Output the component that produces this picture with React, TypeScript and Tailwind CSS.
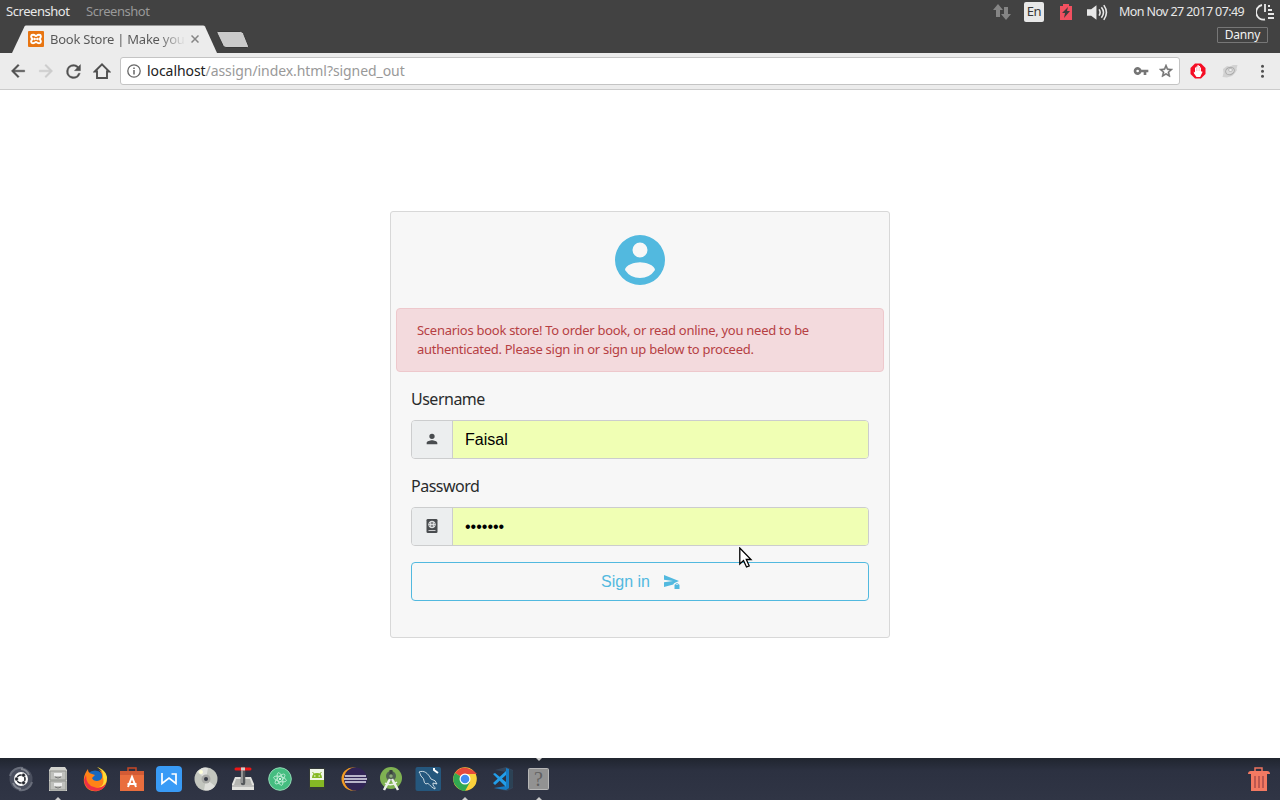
import type { ReactNode } from 'react'

function Svg({ size = 26, box = '0 0 26 26', className = '', children }: { size?: number; box?: string; className?: string; children: ReactNode }) {
  return (
    <svg width={size} height={size} viewBox={box} className={`block shrink-0 ${className}`} fill="none">
      {children}
    </svg>
  )
}

function StatusBar() {
  return (
    <div className="flex h-6 items-center justify-between bg-[#424242] text-[13px] text-[#e8e8e8]">
      <div className="flex pl-[6px]">
        <span className="w-20 tracking-[-0.45px]">Screenshot</span>
        <span className="tracking-[-0.45px] text-[#999]">Screenshot</span>
      </div>
      <div className="flex items-center">
        <Svg size={18} box="0 0 18 18">
          <path d="M5 1 0 7h3v7h4V7h3zM11 4v7H8l5 6 5-6h-3V4z" fill="#858585" />
        </Svg>
        <span className="ml-[13px] flex h-5 w-5 items-center justify-center rounded-[2px] bg-[#e8e8e8] text-[13px] tracking-[-0.3px] text-[#383838]">En</span>
        <Svg size={16} box="0 0 16 16" className="ml-[14px]">
          <path d="M5 0h6v2h3v14H2V2h3z" fill="#f15060" />
          <path d="m10 3-6 6h3l-1 5 6-7H9z" fill="#3d3d3d" />
        </Svg>
        <Svg size={21} box="0 0 20 16" className="ml-[13px]">
          <path d="M0 5h4l5-4v14l-5-4H0z" fill="#e8e8e8" />
          <path d="M11.500 5q2 3 0 6M13.700 3q4 5 0 10M16 1q5 7 0 14" stroke="#e8e8e8" strokeWidth="1.500" />
        </Svg>
        <span className="ml-[11px] w-[137px] whitespace-nowrap text-[12.500px] tracking-[-0.6px]">Mon Nov 27 2017 07:49</span>
        <Svg size={18} box="0 0 18 18" className="mr-[6px]">
          <path d="M6 2a7.200 7.200 0 0 0 3 14.500M9 1v8" stroke="#e8e8e8" strokeWidth="1.800" />
          <path d="M12 3h2M12 7h4M12 11h6M12 15h6" stroke="#e8e8e8" strokeWidth="2" />
        </Svg>
      </div>
    </div>
  )
}

function TabStrip() {
  return (
    <div className="flex h-[29px] items-start justify-between bg-[#424242]">
      <div className="flex">
        <div className="relative h-[29px] w-[217px]">
          <svg width="217" height="29" className="absolute inset-0">
            <path d="M12 29 24.500 2.500Q25 1.500 26 1.500h177q1.500 0 2 1L217 29z" fill="#ececec" />
          </svg>
          <div className="relative flex h-[29px] items-center pl-7">
            <Svg size={16} box="0 0 16 16">
              <rect width="16" height="16" rx="1" fill="#e87511" />
              <path d="M5 3.800C2.600 3.800 2.600 6.200 4.500 8 2.600 9.800 2.600 12.200 5 12.200S7 11 8 11s.6 1.200 3 1.200 2.400-2.400.5-4.200c1.900-1.800 1.900-4.200-.5-4.200S9 5 8 5s-.6-1.200-3-1.200Z" stroke="#fff" strokeWidth="2" />
              <path d="M6.300 6.800v2.400M9.700 6.800v2.400M6 8h4" stroke="#fff" strokeWidth="1.300" />
            </Svg>
            <span className="ml-[6px] w-[134px] whitespace-nowrap bg-gradient-to-r from-[#555] from-80% to-[#e0e0e0] bg-clip-text text-[13px] leading-5 tracking-[-0.25px] text-transparent">Book Store | Make you</span>
            <Svg size={8} box="0 0 8 8" className="ml-[7px]">
              <path d="m.5.500 7 7m0-7-7 7" stroke="#858585" strokeWidth="1.500" />
            </Svg>
          </div>
        </div>
        <svg width="34" height="29" className="-ml-[2px]">
          <path d="M2.500 7.500h23q2 0 3 2l5 12.500q.4 1.500-1 1.500H11q-2 0-3-2L2 9q-.4-1.500.5-1.500" fill="#cacaca" stroke="#383838" />
        </svg>
      </div>
      <div className="mr-3 mt-[3px] flex h-4 w-[51px] items-center justify-center rounded-[1px] border border-[#777] text-[12px] leading-none tracking-[-0.15px] text-[#f2f2f2]">Danny</div>
    </div>
  )
}

function Toolbar() {
  return (
    <div className="flex h-[37px] items-center border-b border-[#cbcbcb] bg-[#ececec] pl-2">
      <Svg size={20} box="0 0 24 24">
        <path d="M20 11H7.830l5.590-5.590L12 4l-8 8 8 8 1.410-1.410L7.830 13H20z" fill="#505050" stroke="#505050" strokeWidth=".5" />
      </Svg>
      <Svg size={20} box="0 0 24 24" className="ml-2">
        <path d="m12 4-1.410 1.410L16.170 11H4v2h12.170l-5.580 5.590L12 20l8-8z" fill="#ccc" stroke="#ccc" strokeWidth=".5" />
      </Svg>
      <Svg size={21} box="0 0 24 24" className="ml-[7px]">
        <path d="M17.650 6.350A7.960 7.960 0 0 0 12 4a8 8 0 1 0 7.730 10h-2.080A6 6 0 1 1 12 6c1.660 0 3.140.69 4.220 1.780L13 11h7V4z" fill="#505050" stroke="#505050" strokeWidth=".4" />
      </Svg>
      <Svg size={18} box="0 0 18 18" className="ml-[9px]">
        <path d="M1.800 9.500 9 2.300l7.200 7.200H14V16H4V9.500z" stroke="#505050" strokeWidth="1.900" />
      </Svg>
      <div className="ml-[9px] flex h-7 w-[1060px] items-center rounded-[3px] border border-[#c4c4c4] bg-white pl-[6px] pr-[5px]">
        <Svg size={14} box="0 0 14 14">
          <circle cx="7" cy="7" r="6.200" stroke="#666" strokeWidth="1.300" />
          <path d="M7 6v4.500M7 3.500v1.500" stroke="#666" strokeWidth="1.500" />
        </Svg>
        <span className="ml-[6px] pb-[2px] text-[14px] tracking-[-0.07px] text-[#999]"><span className="text-[#222]">localhost</span>/assign/index.html?signed_out</span>
        <Svg size={16} box="0 0 24 24" className="ml-auto">
          <path d="M12.650 10A6 6 0 1 0 12.650 14H16v4h4v-4h3v-4zM7 14a2 2 0 1 1 0-4 2 2 0 0 1 0 4" fill="#757575" />
        </Svg>
        <Svg size={16} box="0 0 24 24" className="ml-[9px]">
          <path d="m22 9.240-7.190-.62L12 2 9.190 8.630 2 9.240l5.460 4.730L5.820 21 12 17.270 18.180 21l-1.630-7.030zM12 15.400l-3.760 2.270 1-4.280-3.320-2.880 4.380-.38L12 6.100l1.710 4.040 4.380.38-3.320 2.880 1 4.280z" fill="#707070" stroke="#707070" strokeWidth=".8" />
        </Svg>
      </div>
      <Svg size={16} box="0 0 16 16" className="ml-[10px]">
        <path d="M5 .5h6L15.500 5v6L11 15.500H5L.5 11V5z" fill="#f50d24" />
        <path d="M5 4.500v5l-1.300-1 .3 2L6.500 14h3.700l2.300-5-.7-1-.8 1V4.500h-1V3H8.700V2H7.500v1.500H6.300v1z" fill="#fff" />
        <path d="M6.500 4.500V8M8 3v5M9.700 4v4" stroke="#ef9da5" strokeWidth=".5" />
      </Svg>
      <Svg size={18} box="0 0 18 18" className="ml-[15px]">
        <path d="m2 7 4-3 3 .5 3-1.500 4.500 0-1 4 .5 1-2 3-3 3-5 1.500-4.500-.5 1-4z" fill="#d2d2d2" />
        <ellipse cx="9" cy="9" rx="4.500" ry="3.500" fill="#d9d9d9" stroke="#aaa" transform="rotate(-25 9 9)" />
        <ellipse cx="9.500" cy="8" rx="2" ry="1.500" fill="#eee" stroke="#aaa" strokeWidth=".7" />
      </Svg>
      <Svg size={14} box="0 0 14 14" className="ml-[17px]">
        <circle cx="6.500" cy="2.300" r="1.500" fill="#505050" />
        <circle cx="6.500" cy="7.300" r="1.500" fill="#505050" />
        <circle cx="6.500" cy="12.300" r="1.500" fill="#505050" />
      </Svg>
    </div>
  )
}

function Field({ label, type, value, icon }: { label: string; type: string; value: string; icon: ReactNode }) {
  return (
    <label className="mb-4 block">
      <span className="mb-[10px] block h-[22px] text-[16px] leading-[22px] tracking-[-0.5px] text-[#292b2c]">{label}</span>
      <span className="flex h-[39px] overflow-hidden rounded-[4px] border border-[#cccdce]">
        <span className="flex w-[41px] items-center justify-center border-r border-[#cccdce] bg-[#eceeef] pb-[2px]">{icon}</span>
        <input type={type} defaultValue={value} className="min-w-0 flex-1 bg-[#f0ffb4] px-3 font-['Liberation_Sans',sans-serif] text-[16px] text-black outline-none" />
      </span>
    </label>
  )
}

function LoginCard() {
  return (
    <section className="h-[427px] w-[500px] rounded-[3px] border border-[#d8d8d8] bg-[#f7f7f7] px-[5px] pt-[18px]">
      <Svg size={60} box="0 0 24 24" className="mx-auto">
        <path d="M12 2a10 10 0 1 0 0 20 10 10 0 0 0 0-20m0 3a3 3 0 1 1 0 6 3 3 0 0 1 0-6m0 14.200A7.200 7.200 0 0 1 6 15.980c.03-1.990 4-3.080 6-3.080 1.990 0 5.970 1.090 6 3.080a7.200 7.200 0 0 1-6 3.220" fill="#52b9df" />
      </Svg>
      <div className="mt-[18px] h-16 rounded-[4px] border border-[#eec8cc] bg-[#f3dadd] px-5 py-3 text-[13px] leading-[19px] text-[#b64043]">
        <p className="whitespace-nowrap tracking-[-0.275px]">Scenarios book store! To order book, or read online, you need to be</p>
        <p className="whitespace-nowrap tracking-[-0.275px]">authenticated. Please sign in or sign up below to proceed.</p>
      </div>
      <form className="px-[15px] pt-4">
        <Field
          label="Username"
          type="text"
          value="Faisal"
          icon={<Svg size={16} box="0 0 24 24"><path d="M12 12a4 4 0 1 0 0-8 4 4 0 0 0 0 8m0 2c-2.670 0-8 1.340-8 4v2h16v-2c0-2.660-5.330-4-8-4" fill="#494c4f" /></Svg>}
        />
        <Field
          label="Password"
          type="password"
          value="secret1"
          icon={
            <Svg size={16} box="0 0 16 16">
              <rect x="2.500" y="1" width="11" height="14" rx="1.300" fill="#494c4f" />
              <circle cx="8" cy="6.500" r="3.300" stroke="#eceeef" />
              <path d="M4.700 6.500h6.600M8 3.200v6.600M6.500 4v5M9.500 4v5M4.500 12.500h7" stroke="#eceeef" strokeWidth=".8" />
            </Svg>
          }
        />
        <button type="button" className="flex h-[39px] w-full items-center justify-center rounded-[4px] border border-[#52b9df] pl-[1px] font-['Liberation_Sans',sans-serif] text-[16px] text-[#52b9df]">
          Sign in
          <Svg size={16} box="0 0 16 16" className="ml-[14px]">
            <path d="M0 1 15 7l-3.500 1.400q-1.800.5-2.200 2L0 13V8.300L9 7 0 5.700z" fill="#52b9df" />
            <path d="M10.500 10.700h5v4.300h-5z" fill="#52b9df" />
            <path d="M11.500 11v-.7q1.500-1.800 3 0v.7" stroke="#52b9df" strokeWidth=".8" />
          </Svg>
        </button>
      </form>
    </section>
  )
}

const dockIcons: { name: string; running?: boolean; art: ReactNode }[] = [
  { name: 'Dash', art: <><circle cx="13" cy="13" r="11.500" fill="#4b505f" /><path d="M2 10A11 11 0 0 1 15 2M24 16A11 11 0 0 1 11 24" stroke="#696e7b" strokeWidth="2" /><path d="M5 17A9.500 9.500 0 0 0 13 23M21 9A9.500 9.500 0 0 0 13 3" stroke="#838791" strokeWidth="2" /><circle cx="13" cy="13" r="7" fill="#fff" /><circle cx="13" cy="13" r="4" stroke="#22252c" strokeWidth="1.600" /><circle cx="8.500" cy="13" r="1.900" fill="#22252c" stroke="#fff" strokeWidth=".5" /><circle cx="15.500" cy="9.200" r="1.900" fill="#22252c" stroke="#fff" strokeWidth=".5" /><circle cx="15.500" cy="16.800" r="1.900" fill="#22252c" stroke="#fff" strokeWidth=".5" /></> },
  { name: 'Files', running: true, art: <><path d="m6 1 14 0 2 3v21H4V4z" fill="#d3d4cf" /><path d="M5 5h16v9H5zM5 15h16v9H5z" fill="#c0c1bd" stroke="#92948f" /><path d="M9 7h8v3H9zM9 17h8v3H9z" fill="#eee" /><path d="M10 11q3 2 6 0M10 21q3 2 6 0" stroke="#777" /></> },
  { name: 'Firefox', art: <><circle cx="13" cy="14" r="9.500" fill="#1868bd" /><path d="M6 3c0 3 1 4 4 5l3 1-3 3q1 3 5 3c6 0 7-7 2-11 7 2 9 8 7 14-4 10-20 10-22-2-1-6 2-10 4-13" fill="#ff8217" /><path d="M15 1c6 4 6 6 6 10 2 8-2 10-5 10 8 1 9-6 9-10-1-5-4-8-10-10" fill="#ffdb35" /><path d="M2 14q1 10 11 11 9 0 11-8-5 7-12 4Q4 19 4 9z" fill="#ed3046" /></> },
  { name: 'Software', art: <><path d="M9 6V2h8v4" stroke="#c84826" strokeWidth="1.500" /><path d="M1 5h24v20H1z" fill="#e96e3e" /><path d="M1 5h24v4H1z" fill="#d35b35" /><path d="m9 21 4-10 4 10M8.500 18h9" stroke="#fff" strokeWidth="2" /></> },
  { name: 'Writer', art: <><rect width="26" height="26" rx="4" fill="#399bf6" /><path d="M6 7v10.500l7-5.500 7 5.500V8h-4.500" stroke="#fff" strokeWidth="1.700" /></> },
  { name: 'Disc', art: <><circle cx="13" cy="13" r="11.500" fill="#c3c6bf" /><path d="M13 13 4 6Q9 0 15 2zM13 13l9 7q-5 6-11 4z" fill="#dfe0dc" /><circle cx="13" cy="13" r="4.500" fill="#a9aaa7" /><circle cx="13" cy="13" r="2" fill="#383d47" /><circle cx="8" cy="6" r="2" fill="#ffffda" /></> },
  { name: 'Partition', art: <><path d="m5 11-3 7v6h22v-6l-3-7z" fill="#e2e2de" /><path d="m6 13-2 6h18l-2-6z" fill="#b4b5b1" /><path d="M2 20h22" stroke="#999" /><path d="M13 3v14" stroke="#55585b" strokeWidth="4.500" strokeLinecap="round" /><path d="M12 3v14" stroke="#a8a9a9" strokeWidth="1.500" /><path d="M6 3h14" stroke="#ed1717" strokeWidth="3" strokeLinecap="round" /><path d="M11 3h4" stroke="#ccc" strokeWidth="3" /></> },
  { name: 'Atom', art: <><circle cx="13" cy="13" r="11.300" fill="#45bd80" stroke="#91d8b5" /><ellipse cx="13" cy="13" rx="6.500" ry="2.500" stroke="#d9f7e8" strokeWidth=".7" transform="rotate(15 13 13)" /><ellipse cx="13" cy="13" rx="6.500" ry="2.500" stroke="#d9f7e8" strokeWidth=".7" transform="rotate(75 13 13)" /><ellipse cx="13" cy="13" rx="6.500" ry="2.500" stroke="#d9f7e8" strokeWidth=".7" transform="rotate(135 13 13)" /><circle cx="13" cy="13" r="1" fill="#fff" /></> },
  { name: 'Android', art: <><path d="M5 2h16v22H5z" fill="#343a38" /><path d="M6 3h14v14H6z" fill="#f0f6e8" /><path d="M6 14h14v7H6zM8 12q0-5 5-5t5 5z" fill="#86b924" /><path d="m8.500 6 2.500 3m6.500-3L15 9" stroke="#86b924" /><path d="M10 10h1.500m3 0H16" stroke="#fff" /></> },
  { name: 'Eclipse', art: <><circle cx="12" cy="13" r="11.500" fill="#f39b22" /><circle cx="14.500" cy="13" r="11.500" fill="#312555" /><path d="M4 10h21M3 13h23M4 16h21" stroke="#e4e3ef" strokeWidth="1.700" /></> },
  { name: 'Android Studio', art: <><circle cx="13" cy="12" r="11" fill="#7fb252" /><circle cx="13" cy="10" r="5" fill="#526253" /><path d="M13 4v7" stroke="#39423d" strokeWidth="3" /><circle cx="13" cy="10" r="1.800" fill="#8aaa78" /><path d="m12 13-6 11m8-11 6 11" stroke="#edf1eb" strokeWidth="2.500" /><path d="M7 17q6 4 12-1" stroke="#edf1eb" strokeWidth="1.500" /></> },
  { name: 'Workbench', art: <><rect x=".5" y="1" width="25.500" height="24" rx="2" fill="#25577d" /><path d="M4 6c5-2 9 1 12 7q5 1 6 5l-4-1c-1 3 3 4 2 6-6-3-6-7-9-5-3-1-1-5-4-7-2-1-1-3-3-5" stroke="#dce8ed" strokeWidth=".9" /><path d="M19 2v2l4 3" stroke="#fff" strokeWidth="2" /></> },
  { name: 'Chrome', running: true, art: <><circle cx="13" cy="13" r="11.800" fill="#fbd13c" /><path d="M13 13 3 7Q9-1 18 3q5 2 7 5H13z" fill="#e64a3b" /><path d="M3 7Q-1 14 4 20q4 5 9 5l5-9-5-3z" fill="#31a851" /><circle cx="13" cy="13" r="5.500" fill="#fff" /><circle cx="13" cy="13" r="4.300" fill="#438bf0" /></> },
  { name: 'Code', art: <><path d="m17 1 7 3v18l-6 3-14-3 13-1V6L6 4z" fill="#35465b" /><path d="m17 2 3 1v19l-3 2-12-2 12-2z" fill="#167cc5" /><path d="m4 8 2-1 11 9v5zM4 17 17 5v4L6 19z" fill="#229eea" /><path d="m20 3 4 2v16l-4 2z" fill="#2c4255" /></> },
  { name: 'Help', running: true, art: <><rect x="2.500" y="2.500" width="20" height="21" rx="1" fill="#929292" stroke="#b7b7b7" /></> },
]

function Dock() {
  return (
    <footer className="flex h-[42px] justify-between bg-gradient-to-b from-[#20252f] via-[#2c3141] via-30% to-[#303545] pl-[2px] pr-2">
      <div className="flex">
        {dockIcons.map((icon) => (
          <div key={icon.name} title={icon.name} className="relative flex w-[37px] justify-center pt-2">
            <Svg>{icon.art}</Svg>
            {icon.name === 'Help' && <span className="absolute top-[9px] font-['Liberation_Serif',serif] text-[20px] leading-6 text-[#606060]">?</span>}
            {icon.name === 'Help' && <svg width="6" height="3" className="absolute top-0"><path d="M0 0h6L3 3z" fill="#ccc" /></svg>}
            {icon.running && <svg width="6" height="3" className="absolute bottom-0"><path d="M0 3h6L3 0z" fill="#ccc" /></svg>}
          </div>
        ))}
      </div>
      <Svg size={26} className="mt-2">
        <path d="M9 5V2h7v3" stroke="#ed735e" strokeWidth="1.500" />
        <path d="M2 8q0-3 3-3h16q3 0 3 3z" fill="#f37962" />
        <path d="M5 8h16v17H5z" fill="#f37962" />
        <path d="M9 10v12m4-12v12m4-12v12" stroke="#bd5750" strokeWidth="2" />
      </Svg>
    </footer>
  )
}

export default function App() {
  return (
    <div className="relative flex h-screen w-full flex-col overflow-hidden bg-white font-['Noto_Sans',sans-serif]">
      <StatusBar />
      <TabStrip />
      <Toolbar />
      <main className="flex min-h-0 flex-1 items-start justify-center pt-[121px]">
        <LoginCard />
      </main>
      <Dock />
      <svg width="14" height="22" viewBox="0 0 14 22" className="absolute left-[739px] top-[547px]">
        <path d="M.8 1v16l3.700-3.500 3 6.500 2.700-1.200-2.900-6.300H12z" fill="#fff" stroke="#000" strokeWidth="1.300" />
      </svg>
    </div>
  )
}
